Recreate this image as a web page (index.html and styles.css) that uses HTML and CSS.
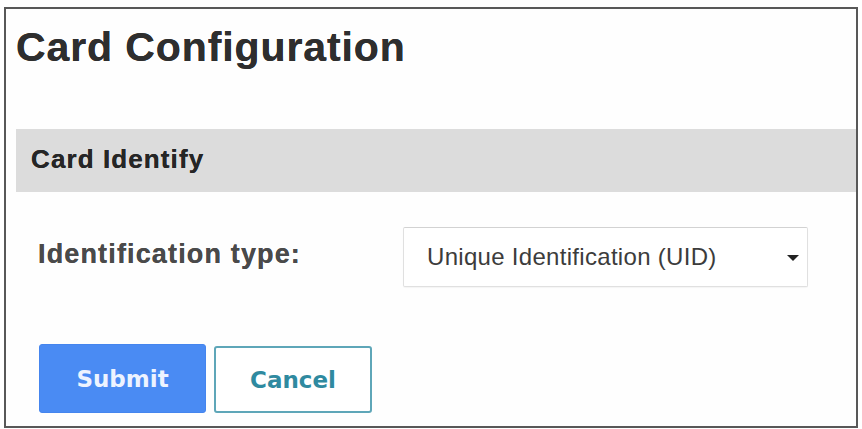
FILE: index.html
```html
<!DOCTYPE html>
<html>
<head>
<meta charset="utf-8">
<link rel="stylesheet" href="styles.css">
</head>
<body>
<div class="panel">
  <h1 class="title">Card Configuration</h1>
  <div class="section-bar">Card Identify</div>
  <div class="form-row">
    <label class="label">Identification type:</label>
    <div class="select">
      <span class="select-text">Unique Identification (UID)</span>
      <svg class="caret" width="12" height="6" viewBox="0 0 12 6"><path d="M0 0 H12 L6 6 Z" fill="#222"/></svg>
    </div>
  </div>
  <div class="actions">
    <button class="btn btn-primary">Submit</button>
    <button class="btn btn-secondary">Cancel</button>
  </div>
</div>
</body>
</html>
```
FILE: styles.css
```css
html, body {
  margin: 0;
  padding: 0;
  background: #ffffff;
}
body {
  padding: 7px 5px 0 4px;
  font-family: "Liberation Sans", Arial, sans-serif;
}
.panel {
  box-sizing: border-box;
  width: 854px;
  height: 421px;
  border: 2px solid #585858;
  background: #fefefe;
}
.title {
  margin: 0;
  padding: 18px 0 0 10px;
  font-size: 41px;
  line-height: 41px;
  font-weight: bold;
  letter-spacing: 0.9px;
  color: #2e2e2e;
  text-shadow: 0 0 0.6px #2e2e2e;
}
.section-bar {
  margin: 61px 0 0 10px;
  padding: 0 0 3px 15px;
  height: 60px;
  line-height: 60px;
  background: #dcdcdc;
  font-size: 26px;
  font-weight: bold;
  letter-spacing: 1.1px;
  color: #262626;
  text-shadow: 0 0 0.5px #262626;
}
.form-row {
  display: flex;
  align-items: center;
  margin-top: 35px;
  padding-left: 32px;
}
.label {
  width: 365px;
  font-size: 27px;
  font-weight: bold;
  letter-spacing: 1.15px;
  color: #4a4a4a;
  text-shadow: 0 0 0.5px #4a4a4a;
  padding-bottom: 5px;
}
.select {
  box-sizing: border-box;
  width: 405px;
  height: 60px;
  display: flex;
  align-items: center;
  justify-content: space-between;
  padding: 0 8px 0 23px;
  border: 1px solid #e0e0e0;
  border-top-color: #d2d2d2;
  border-radius: 2px;
  background: #fff;
  box-shadow: 0 1px 1px rgba(0,0,0,0.04);
}
.select-text {
  font-size: 24px;
  letter-spacing: 0.3px;
  color: #3c3c3c;
}
.caret {
  display: block;
  margin-top: 2px;
}
.actions {
  display: flex;
  align-items: flex-end;
  gap: 8px;
  margin-top: 57px;
  padding-left: 33px;
}
.btn {
  box-sizing: border-box;
  font-family: "DejaVu Sans", Verdana, sans-serif;
  font-weight: bold;
  font-size: 23px;
  border-radius: 3px;
  cursor: pointer;
  margin: 0;
}
.btn-primary {
  width: 167px;
  height: 69px;
  background: #4a8bf3;
  border: 1px solid #4585ee;
  color: #edf3ff;
}
.btn-secondary {
  width: 158px;
  height: 67px;
  background: #ffffff;
  border: 2px solid #5ea6b8;
  color: #2f8aa0;
}
```
